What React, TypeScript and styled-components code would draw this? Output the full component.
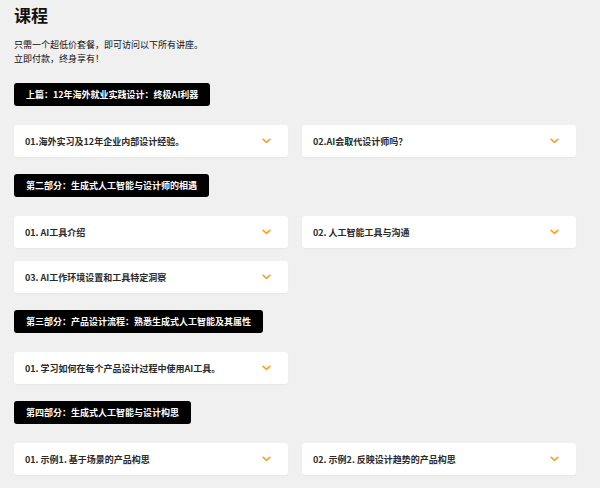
import React from 'react'
import styled, {createGlobalStyle} from 'styled-components'

const GlobalStyle = createGlobalStyle`
  html, body {
    margin: 0;
    padding: 0;
    background: #f0f0f0;
    font-family: "Noto Sans CJK SC", "Noto Sans", sans-serif;
  }
`

type Lesson = string
type Section = {title: string, lessons: Lesson[]}

const sections: Section[] = [
    {
        title: '上篇：12年海外就业实践设计：终极AI利器',
        lessons: ['01.海外实习及12年企业内部设计经验。', '02.AI会取代设计师吗？']
    },
    {
        title: '第二部分：生成式人工智能与设计师的相遇',
        lessons: ['01. AI工具介绍', '02. 人工智能工具与沟通', '03. AI工作环境设置和工具特定洞察']
    },
    {
        title: '第三部分：产品设计流程：熟悉生成式人工智能及其属性',
        lessons: ['01. 学习如何在每个产品设计过程中使用AI工具。']
    },
    {
        title: '第四部分：生成式人工智能与设计构思',
        lessons: ['01. 示例1. 基于场景的产品构思', '02. 示例2. 反映设计趋势的产品构思']
    }
]

function Chevron() {
    return (
        <svg width="9" height="6" viewBox="0 0 9 6" fill="none">
            <path d="M1.2 1.4 L4.5 4.4 L7.8 1.4" stroke="#f5a623" strokeWidth="1.8" strokeLinecap="round"
                  strokeLinejoin="round"/>
        </svg>
    )
}

function App() {
    return (
        <Page>
            <GlobalStyle/>
            <Title>课程</Title>
            <Intro>
                只需一个超低价套餐，即可访问以下所有讲座。<br/>
                立即付款，终身享有！
            </Intro>
            {sections.map(section => (
                <Block key={section.title}>
                    <SectionTag>{section.title}</SectionTag>
                    <Grid>
                        {section.lessons.map(lesson => (
                            <Card key={lesson}>
                                <CardText>{lesson}</CardText>
                                <Chevron/>
                            </Card>
                        ))}
                    </Grid>
                </Block>
            ))}
        </Page>
    )
}

export default App

const Page = styled.div`
  width: 562px;
  padding: 3px 0 0 14px;
  box-sizing: content-box;
`

const Title = styled.h1`
  margin: 0;
  font-size: 17px;
  line-height: 24px;
  font-weight: 700;
  color: #111;
`

const Intro = styled.p`
  margin: 11px 0 17px;
  font-size: 9px;
  line-height: 14px;
  color: #111;
`

const Block = styled.section`
  display: flex;
  flex-direction: column;
  align-items: flex-start;
  margin-bottom: 17px;
`

const SectionTag = styled.div`
  height: 23px;
  display: flex;
  align-items: center;
  padding: 0 12px;
  background: #000;
  color: #fff;
  border-radius: 3px;
  font-size: 9px;
  font-weight: 700;
  margin-bottom: 19px;
`

const Grid = styled.div`
  width: 100%;
  display: grid;
  grid-template-columns: 1fr 1fr;
  column-gap: 14px;
  row-gap: 13px;
`

const Card = styled.div`
  height: 32px;
  display: flex;
  align-items: center;
  justify-content: space-between;
  padding: 0 17px 0 11px;
  background: #fff;
  border-radius: 3px;
  box-shadow: 0 1px 2px rgba(0, 0, 0, 0.04);
`

const CardText = styled.span`
  font-size: 9px;
  font-weight: 700;
  color: #2a2a2a;
`
